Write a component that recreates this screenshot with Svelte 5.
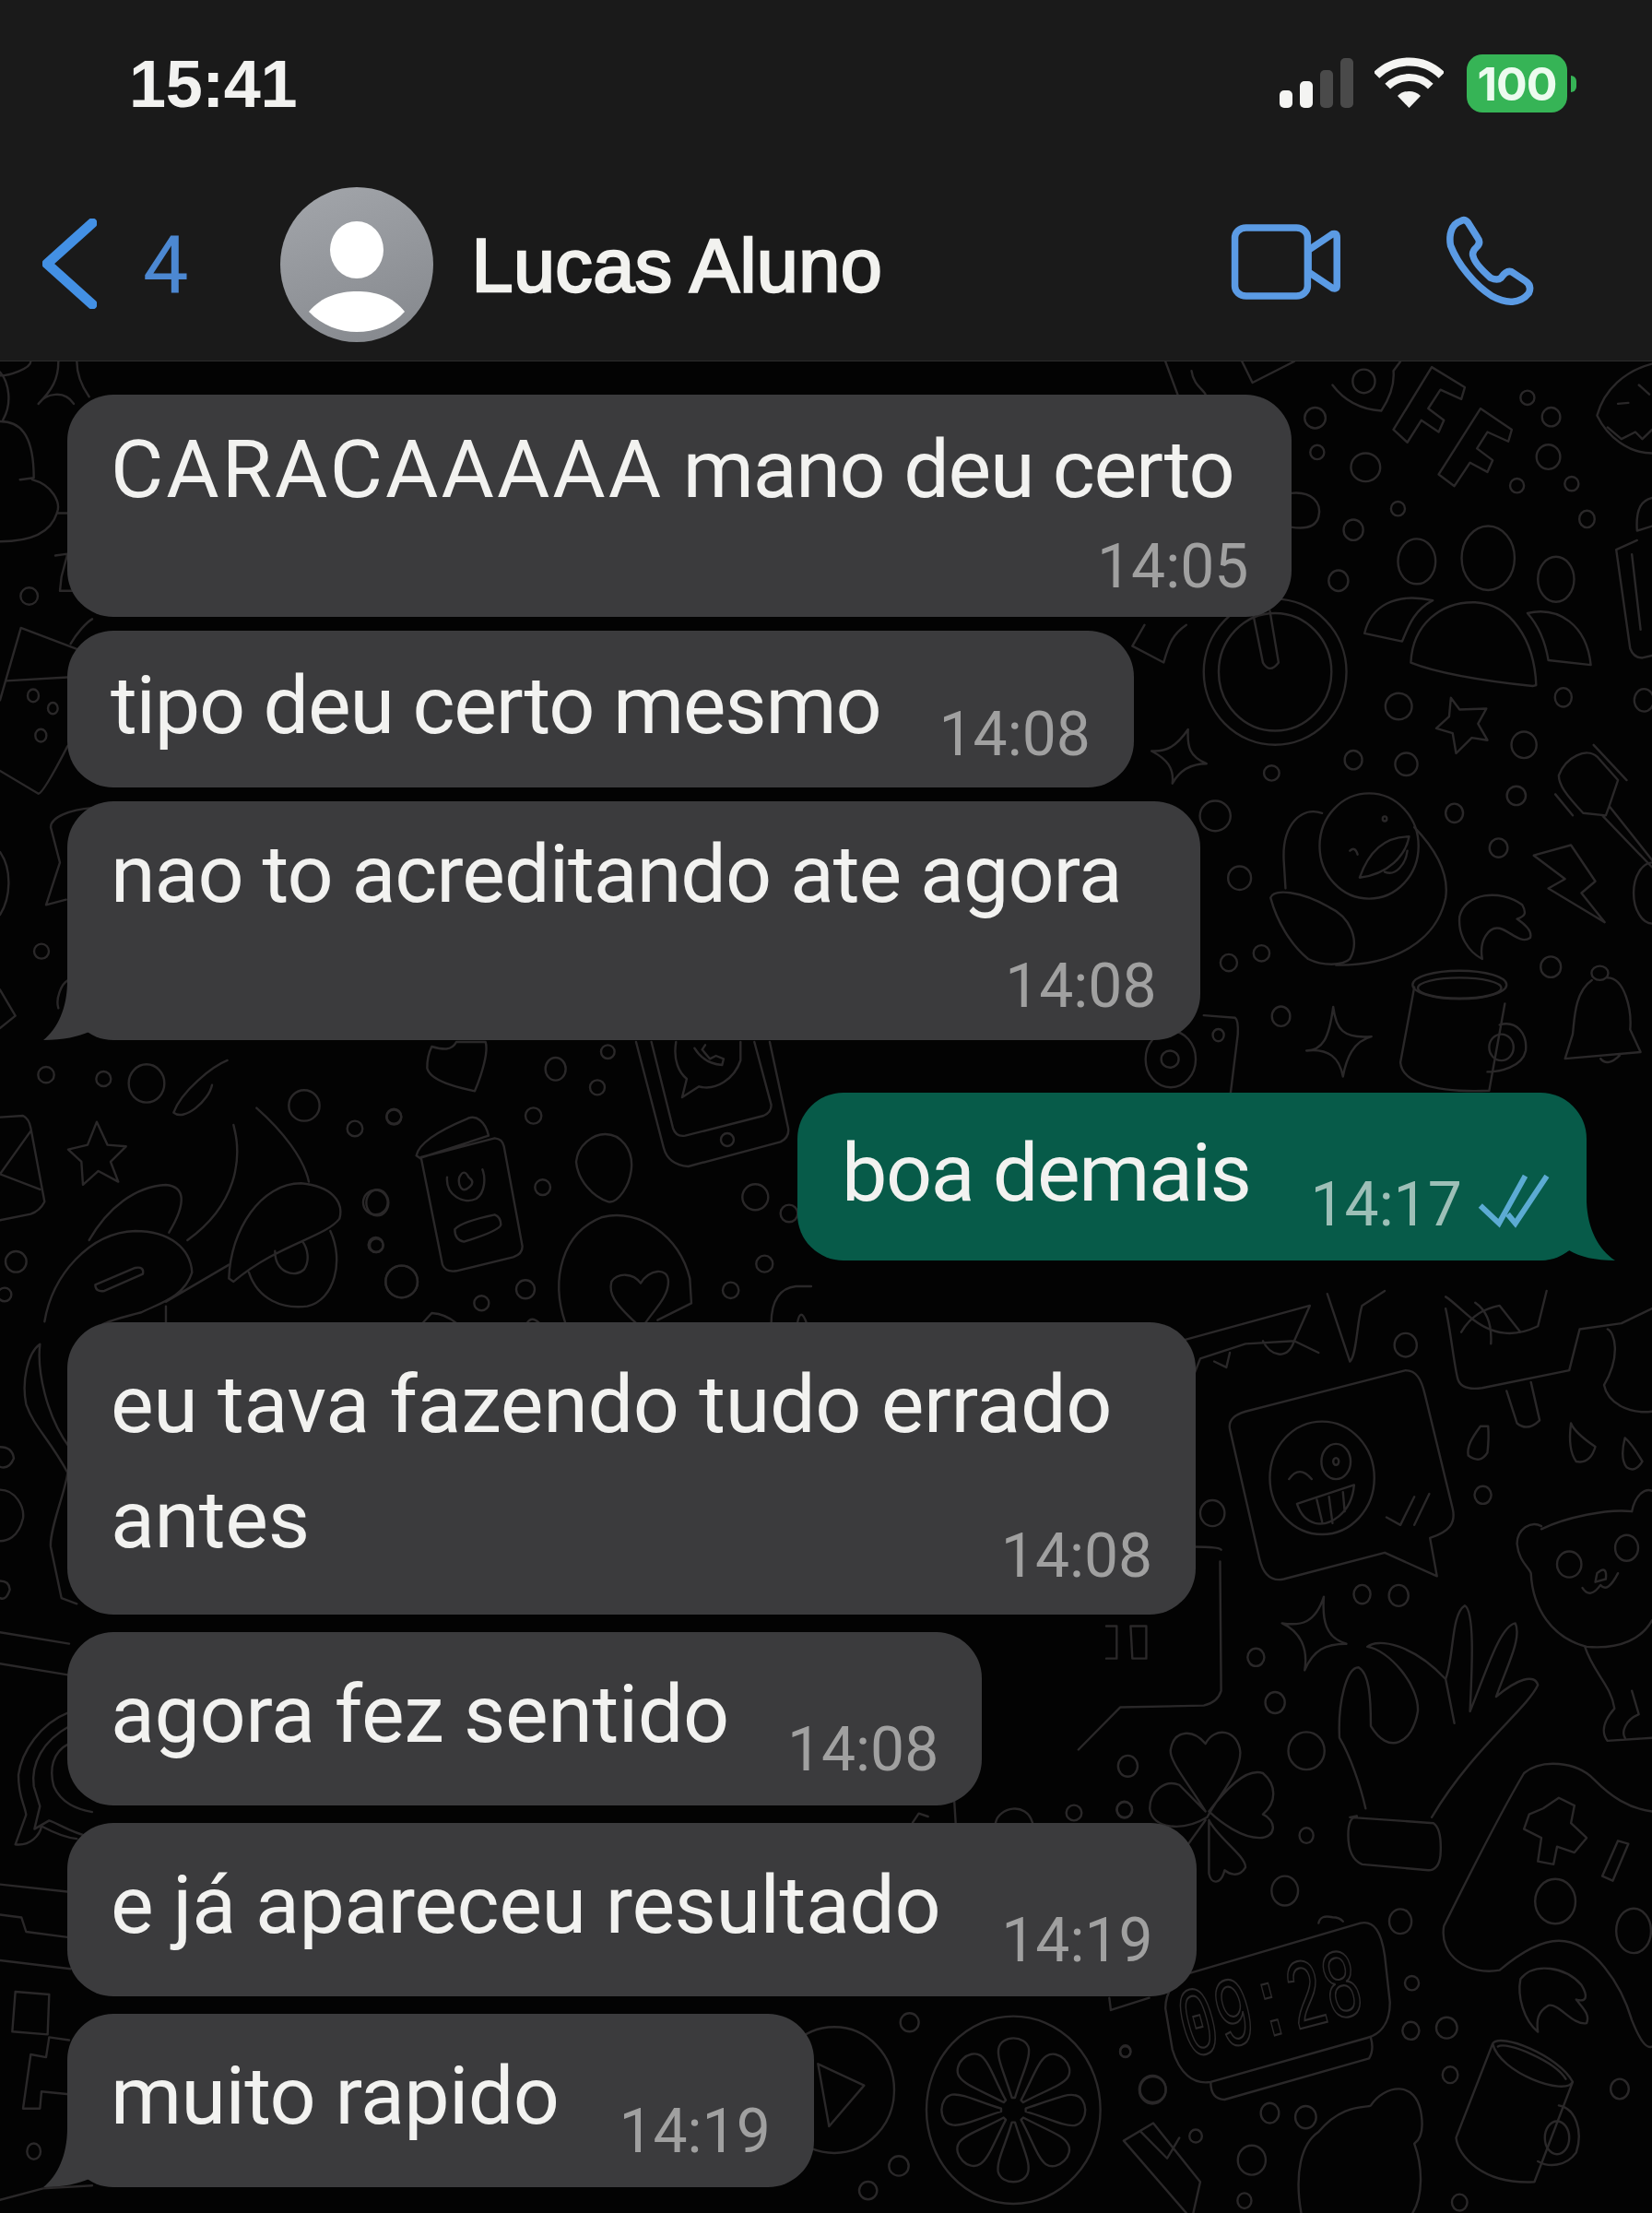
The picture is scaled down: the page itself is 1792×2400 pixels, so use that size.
<script>
  const rings6 = [[600,120,30,22],[606,193,20,15],[745,225,42,30],[710,358,28,22],[838,313,20,15],[667,466,28,22],[1210,77,20,15],[1278,118,26,20],[1270,203,34,26],[1180,264,20,15],[1337,260,20,15],[1381,335,22,18],[840,733,38,28],[710,847,25,20],[862,856,32,24],[1200,815,36,28],[1313,714,24,20],[1178,923,27,20],[1000,960,25,20],[1127,1034,26,20],[475,875,22,16],[313,966,44,32],[383,1098,33,25],[352,1278,24,18],[446,1258,23,17],[502,1392,26,21],[1277,1287,29,22],[1545,720,28,24],[740,42,32,25],[1097,418,76,68],[892,425,54,48],[1292,463,52,48],[485,660,205,155],[485,660,162,125],[1570,1130,55,65],[755,1030,142,112],[800,972,6,5],[1015,1325,135,30],[1015,1332,120,22],[1135,1458,35,28],[1418,1300,24,15],[185,1483,72,60],[183,1483,25,18],[322,1432,16,13]];
  const paths6 = ["M650 50Q700 100 790 105Q830 60 825 20L845 0","M825 145L935 12L1030 55L1020 80L960 60L925 100L970 125L955 150L905 125L865 172Z","M955 240L1075 100L1165 145L1155 170L1095 150L1065 185L1110 210L1095 235L1045 215L1000 265Z","M875 640C880 560 960 510 1060 512C1160 515 1230 590 1235 688L1225 690C1100 680 960 665 875 640Z","M742 578C760 520 830 490 938 508C880 530 865 570 850 595Z","M1210 535C1300 520 1380 560 1392 645L1270 635C1260 590 1240 560 1210 535Z","M1410 115C1430 60 1490 20 1568 5M1410 115C1440 160 1500 195 1568 195M1440 140L1480 165L1520 150L1540 165L1568 145M1470 90L1500 88M1530 50L1560 70","M1568 290C1540 295 1520 310 1525 360L1568 350M1525 380L1465 400L1505 610Q1515 630 1540 630L1568 625M1510 410L1535 570","M420 530L450 640Q470 665 495 640L470 530","M130 828C170 830 200 820 235 782C232 820 240 840 288 855C240 855 210 870 190 897C195 865 175 845 130 828Z","M990 715L1015 740L1092 738L1068 770L1095 805L1050 800L1005 833L995 790L948 780L985 755Z","M1300 880C1320 840 1380 820 1410 840L1470 890L1445 945L1568 1060M1400 815L1495 890M1300 880C1300 900 1320 920 1370 960L1435 965L1445 945M1290 920L1340 965M1425 965L1568 1075","M1228 1050L1335 1028L1405 1105L1365 1130L1432 1192L1270 1120L1318 1100Z","M620 960C560 945 505 985 510 1060L515 1120M885 990C950 1040 985 1090 975 1140C950 1230 830 1285 660 1283","M472 1140C480 1120 560 1125 640 1160C700 1180 730 1230 700 1270C680 1285 620 1285 580 1270C530 1240 490 1190 472 1140Z","M728 1097C750 1050 790 1010 870 1010C860 1050 810 1090 728 1097ZM800 1085C830 1095 860 1070 865 1040M700 1040Q715 1030 722 1048","M1080 1270C1040 1255 1010 1220 1015 1180C1030 1130 1130 1120 1195 1155C1210 1175 1200 1180 1180 1185C1200 1195 1225 1210 1218 1225C1190 1240 1160 1210 1130 1205C1100 1200 1070 1230 1080 1270Z","M885 1330L845 1490C850 1530 930 1555 1100 1550L1145 1365M1130 1410C1180 1400 1210 1430 1205 1465C1195 1500 1130 1510 1095 1510","M1395 1315C1345 1340 1345 1400 1340 1430L1318 1482L1535 1468L1505 1420C1510 1380 1490 1310 1440 1310M1420 1482Q1440 1500 1475 1475","M575 1465C620 1465 640 1440 652 1372C660 1420 680 1440 762 1435C710 1445 690 1480 680 1520C670 1480 640 1460 575 1465Z","M280 1390L370 1395Q380 1400 378 1430L355 1568","M530 280C590 275 620 300 610 330Q600 360 530 352","M170 0L205 70M245 20C250 50 280 60 285 70M390 0L420 45L540 0","M110 560L75 605L165 640C180 600 190 580 230 560"];

  const rings5 = [[860,92,32,20],[305,378,35,22],[1082,347,24,15],[735,516,24,16],[840,518,28,18],[430,623,24,15],[485,700,28,18],[575,782,52,32],[62,808,28,18],[52,882,22,14],[575,926,20,13],[513,1020,38,25],[845,1072,32,21],[878,1177,20,12],[875,1258,24,15],[978,1253,30,18],[988,1333,22,14],[55,1293,15,10],[133,1358,38,24],[470,1398,26,17],[573,1405,30,19],[418,1478,40,25],[257,1437,18,11],[397,1547,20,13],[1015,1550,22,14],[1475,1357,26,17],[1515,1088,50,38],[620,318,150,96],[660,290,42,30],[660,290,8,6],[1330,465,35,22],[1495,437,33,22],[1290,1038,58,38],[1295,1440,35,28]];
  const paths5 = ["M355 235C350 220 370 210 400 205L860 135C890 135 905 150 915 175L995 370C1005 395 985 410 930 420L950 485L800 445L510 490C470 495 450 480 440 455Z","M525 320Q555 295 590 320M548 362L712 330C705 380 640 400 600 395C570 390 555 375 548 362ZM605 355L620 392M640 350L650 395M680 342L685 375M805 385L845 398L885 350M885 398L928 345","M1075 230C1050 250 1035 265 1040 280Q1075 295 1095 275Q1100 250 1097 230Z","M1335 225C1345 240 1380 255 1405 265Q1390 295 1350 290Q1325 270 1335 225Z","M1490 250C1510 260 1530 280 1540 290Q1520 310 1495 300Q1475 285 1490 250Z","M1250 400C1220 390 1180 405 1180 430C1185 460 1215 470 1220 480C1225 540 1280 590 1380 605C1480 610 1540 590 1568 560M1250 405C1320 385 1440 370 1510 375C1520 345 1550 335 1568 340M1410 480Q1440 465 1435 490L1405 495ZM1368 505Q1390 525 1420 500Q1440 515 1470 480M1375 605C1400 650 1450 670 1460 710C1430 730 1420 750 1440 765L1568 760M1510 680L1530 720C1490 730 1480 750 1490 760","M505 565C560 570 600 565 625 520C620 560 630 590 690 600C630 600 595 610 570 645C580 610 560 580 505 565Z","M745 880C730 840 700 790 670 760C665 700 690 640 725 640C755 650 760 690 760 740C810 790 880 770 895 715C900 670 810 610 750 605C780 590 880 600 975 660C1000 620 990 550 1030 535C1060 545 1050 650 1045 715C1090 650 1130 570 1175 565C1195 590 1150 640 1120 690C1180 660 1230 650 1240 670C1210 710 1050 780 935 895M1000 735L975 660","M700 895L940 905Q965 915 960 960Q955 985 925 985L735 975Q695 965 695 925Q695 895 720 893Z","M285 885C240 840 180 800 185 780C195 745 250 745 285 770C310 740 380 745 385 785C385 820 320 860 290 895M290 895C220 920 130 915 125 880C125 850 170 830 210 840L285 885M295 885C340 850 400 810 450 820C490 840 490 870 450 890C490 900 490 930 440 930C390 930 330 905 295 885M295 900C320 930 400 960 400 980C380 1000 350 990 340 985C330 1010 300 1010 295 990L295 900M285 900L230 945","M1568 885C1500 880 1450 860 1400 830C1350 800 1250 795 1200 820C1120 900 1020 1020 970 1080C955 1130 1040 1165 1130 1155C1180 1130 1240 1105 1300 1105C1400 1105 1480 1180 1510 1240C1530 1270 1550 1290 1568 1285","M1255 880L1300 862L1345 875L1335 905L1380 930L1345 955L1295 945L1285 975L1240 970L1250 930L1200 915L1215 890Z","M1425 995L1470 935L1500 940L1455 1003Z","M1240 1260C1200 1240 1180 1200 1190 1170C1230 1140 1320 1150 1365 1180C1385 1200 1380 1210 1350 1205C1370 1220 1390 1230 1380 1245C1340 1250 1300 1210 1270 1215C1240 1225 1235 1240 1240 1260Z","M170 1220C170 1190 200 1170 240 1160L730 1075C770 1070 790 1090 800 1130L815 1210C815 1250 780 1265 750 1270L300 1345C250 1350 210 1330 190 1290ZM300 1345Q300 1375 340 1375L755 1305Q770 1290 760 1270M610 1075Q615 1060 650 1065Q670 1065 680 1072","M1110 1280C1130 1260 1300 1300 1340 1345C1320 1370 1130 1330 1110 1280ZM1125 1285C1150 1275 1290 1310 1320 1340M1110 1280L1005 1440C1010 1470 1080 1520 1230 1515L1340 1345M1300 1385C1350 1390 1370 1430 1350 1465C1320 1490 1270 1490 1240 1480","M975 30C990 70 1000 130 1010 150Q1020 170 1080 165L1330 135L1360 65L1480 55L1568 30M975 10C1030 30 1100 100 1240 60L1265 0M1020 70C1050 40 1090 30 1130 25L1190 70M1060 20Q1110 40 1105 90M1150 170L1180 225Q1210 240 1245 220L1220 155","M215 85L585 25L540 85L400 90L270 115L250 145M355 105L345 130L310 120M450 85C470 110 520 120 540 85M540 85L610 105M635 5L700 120C720 110 720 50 735 25L800 0","M1440 65C1460 70 1480 110 1430 160C1440 190 1500 210 1568 205","M330 440Q325 435 250 435M327 460L330 680Q320 700 280 705L40 708L-80 780M0 570L30 570L30 625L0 625M70 570L115 570L115 625L75 625Z","M560 1568C540 1500 560 1450 610 1430C680 1380 750 1390 760 1385C800 1350 890 1340 905 1400C910 1420 910 1440 885 1450C910 1490 910 1540 880 1568","M50 1445L135 1415L270 1515L250 1568M50 1445L230 1568M100 1430L175 1475L210 1440"];

  const rings7 = [[778,62,22,22],[608,118,33,37],[744,178,24,24],[82,275,24,24],[536,270,26,26],[566,503,25,25],[28,553,36,42],[25,692,22,22],[107,810,52,52],[510,835,30,30],[367,880,24,24],[1258,535,42,42],[1368,588,28,28],[1288,752,27,27],[1178,838,26,26],[1167,348,21,21]];
  const paths7 = ["M205 45C240 55 270 60 285 30L380 30C390 60 370 130 345 190C300 180 200 160 190 115Q190 75 205 45Z","M155 400C160 370 200 330 320 280C350 265 380 290 390 335L175 405M170 405L410 343Q435 345 440 370L500 695Q500 720 470 730L285 775Q250 780 240 755ZM155 400L170 410","M280 640Q300 615 410 592Q430 600 430 625Q425 645 310 680Q280 675 280 640Z","M255 470C250 530 310 560 350 540C380 520 380 470 370 445M330 500C300 530 290 490 295 470Q310 440 325 470C340 480 340 490 330 500Z","M770 330C820 330 860 380 855 440C850 500 810 555 780 550C730 535 680 480 675 420C680 365 730 330 770 330Z","M870 30L960 375Q975 430 1040 435L1340 355Q1370 340 1365 310L1305 30M920 30L990 310Q1000 340 1030 335L1285 270Q1310 260 1310 235L1255 30","M1000 30C990 90 1010 130 1035 150L1020 210L1075 175C1130 190 1190 150 1210 90L1210 30M1060 50Q1090 100 1150 105L1155 85L1130 75L1110 85L1085 55L1095 40","M640 945C590 800 630 650 760 600C880 570 1010 660 1045 800L1050 880L940 935M870 945C800 880 780 850 790 810C810 780 860 780 885 815C910 770 975 760 975 810C975 860 930 900 900 945","M175 945L205 912Q250 915 285 945M515 945Q530 920 555 945M1310 945C1310 870 1340 830 1390 825L1440 825M1395 945Q1405 890 1425 945"];

  const rings4 = [[135,245,24,24],[150,647,26,26],[337,660,24,24],[477,675,58,62],[990,747,50,50],[1155,822,25,25],[1282,782,24,24],[1222,1062,40,40],[1223,1200,24,24],[1307,1320,52,52],[52,1255,34,34],[15,1362,22,22]];
  const paths4 = ["M315 800L350 875L410 880L360 930L385 995L320 960L270 1005L265 930L222 890L285 875Z","M0 785L75 780Q95 790 100 820L145 1060Q130 1090 100 1100L0 1120M100 830L0 970L130 1020","M740 600C690 620 590 700 565 770C600 800 680 730 690 680M760 810C790 920 770 1070 610 1185M835 755C920 830 990 920 1005 995","M745 1310C750 1150 850 1000 980 1000C1080 1010 1120 1060 1105 1115C1060 1175 900 1200 760 1320ZM810 1290C840 1380 920 1410 1000 1400C1090 1380 1120 1250 1075 1155M895 1220C895 1290 960 1310 990 1280C1010 1250 1000 1210 985 1190","M290 1185C350 1080 440 1010 540 1005C600 1010 610 1060 550 1160M145 1450C170 1300 290 1160 440 1155C550 1155 620 1210 625 1290C600 1370 520 1390 460 1420C380 1440 300 1460 290 1500M310 1330L440 1275Q470 1270 465 1295L340 1350Q310 1355 310 1330ZM540 1385L745 1265M540 1400L540 1460","M0 370L50 455L0 495M220 340C200 350 180 400 190 430"];

  const rings10 = [[410,730,30,30],[375,1197,32,32],[275,1277,29,29],[945,48,25,25],[1110,38,25,25],[1112,825,17,17],[1202,948,42,42],[748,1015,283,305],[165,950,195,205]];
  const paths10 = ["M112 865L262 935L148 1068Z","M1060 650L1065 690L1190 650","M690 80C700 30 790 10 810 80M420 80L440 50L470 60M555 0L560 80"];
  const petals = [0,45,90,135,180,225,270,315];

  const rings8 = [[95,665,28,24],[108,947,18,18],[172,983,16,16],[133,1060,18,18]];
  const paths8 = ["M0 170C60 170 110 200 110 330L65 335M105 335C170 350 200 400 185 430C160 500 70 510 0 510M0 30C30 60 40 120 10 165M125 120C150 90 210 80 240 120M190 0C190 50 170 80 125 120M250 0Q250 50 290 100M190 430L220 430M0 40C30 40 100 20 100 0","M180 550L220 545L200 610L195 650L240 650","M68 755L250 815M68 755L0 960M20 905L220 895M0 1160L125 1225Q140 1225 220 1090M230 800C250 770 280 740 300 730","M300 1265C230 1270 165 1290 165 1320L195 1420L150 1540L215 1525M0 1390C40 1440 35 1520 0 1568"];

  const rings9 = [[110,1460,22,14]];
  const paths9 = ["M130 45C90 60 70 110 85 150C110 190 160 210 220 270C215 300 160 370 165 400L200 490L250 500M130 45C120 90 150 170 225 225","M0 225Q40 225 45 245Q30 265 0 260M0 300C50 300 80 330 75 350C60 385 20 390 0 390M0 460Q30 460 32 475Q20 495 0 490","M0 550L225 570M0 605L225 625","M225 690C130 710 70 760 60 800C60 840 80 850 85 870L50 922C100 925 130 905 135 890C170 900 210 910 250 912M225 715C140 740 100 780 110 820L130 855L112 895L160 880C190 885 225 900 300 910M225 745C170 760 160 790 175 820C200 850 250 860 300 865","M0 992L225 1005M0 1045L70 1050L85 1075L225 1085M0 1125L230 1140","M50 1180L160 1185L155 1255L40 1250Z","M100 1290L75 1385L130 1385L135 1355L225 1360M100 1290L150 1295L160 1260L225 1265","M0 1545L140 1525L300 1520"];

  const groups = [
    { t: "translate(1200 392) scale(.3776 .5102)", rings: rings6, paths: paths6 },
    { t: "translate(1200 1400) scale(.3776 .6378)", rings: rings5, paths: paths5 },
    { t: "translate(400 1120) scale(.3333)", rings: rings7, paths: paths7 },
    { t: "translate(0 950) scale(.3333)", rings: rings4, paths: paths4 },
    { t: "translate(850 1950) scale(.3333)", rings: rings10, paths: paths10 },
    { t: "translate(0 392) scale(.3333 .3827)", rings: rings8, paths: paths8 },
    { t: "translate(0 1430) scale(.3333 .6186)", rings: rings9, paths: paths9 }
  ];
</script>

<div class="phone">
  <header class="top">
    <div class="status">
      <span class="clock">15:41</span>
      <div class="indicators">
        <div class="signal">
          <i class="b1"></i><i class="b2"></i><i class="b3 off"></i><i class="b4 off"></i>
        </div>
        <svg class="wifi" viewBox="0 0 75 55" aria-hidden="true">
          <path d="M37.5 55L25 42A18 18 0 0 1 50 42Z" fill="#f4f4f2" />
          <path d="M14.2 31.7A33 33 0 0 1 60.8 31.7" fill="none" stroke="#f4f4f2" stroke-width="8" />
          <path d="M2.1 19.6A50 50 0 0 1 72.9 19.6" fill="none" stroke="#f4f4f2" stroke-width="9" />
        </svg>
        <div class="battery"><span>100</span></div>
        <i class="nub"></i>
      </div>
    </div>
    <nav class="nav">
      <svg class="chev" viewBox="0 0 59 98" aria-hidden="true">
        <path d="M54 5L5 49L54 93" fill="none" stroke="#4390e4" stroke-width="11" stroke-linecap="round" stroke-linejoin="round" />
      </svg>
      <span class="count">4</span>
      <div class="avatar">
        <svg viewBox="0 0 166 168" aria-hidden="true">
          <ellipse cx="83" cy="68" rx="29" ry="31" fill="#fff" />
          <path d="M31 135C45 118 65 113 83 113C102 113 122 118 135 135C122 150 102 157 83 157C65 157 45 150 31 135Z" fill="#fff" />
        </svg>
      </div>
      <span class="name">Lucas Aluno</span>
      <svg class="video" viewBox="358 730 314 245" preserveAspectRatio="none" aria-hidden="true">
        <rect x="370" y="742" width="208" height="221" rx="32" class="ic" />
        <path d="M580 815L650 762Q662 758 662 772L662 930Q662 942 650 938L580 885Z" class="ic" />
      </svg>
      <svg class="call" viewBox="970 700 268 303" preserveAspectRatio="none" aria-hidden="true">
        <path class="ic" d="M1020 720C990 730 985 770 990 800C1010 860 1060 930 1110 965C1150 990 1190 990 1215 955Q1225 930 1205 915L1165 885Q1150 880 1135 905Q1125 915 1105 905C1090 890 1060 860 1055 835Q1050 820 1065 805Q1078 790 1068 775L1040 725Q1030 712 1020 720Z" />
      </svg>
    </nav>
  </header>

  <main class="chat">
    <svg class="wall" viewBox="0 392 1792 2008" aria-hidden="true">
      {#each groups as g}
        <g transform={g.t}>
          {#each g.rings as r}
            <ellipse cx={r[0]} cy={r[1]} rx={r[2]} ry={r[3]} class="dd" />
          {/each}
          {#each g.paths as d}
            <path {d} class="dd" />
          {/each}
        </g>
      {/each}
      <g transform="translate(850 1950) scale(.3333) translate(748 1015)">
        {#each petals as a}
          <path class="dd" transform="rotate({a})" d="M-5 -40C-30 -120 -55 -170 -48 -200C-40 -245 40 -245 50 -200C55 -165 25 -110 5 -40Z" />
        {/each}
      </g>
      <text transform="translate(1289 2232) rotate(-14.7) scale(1 1.6)" class="clocktext">09:28</text>
    </svg>

    <div class="bubble in stack b-a">
      <p class="msg pad-a"><span class="caps">CARACAAAAA</span> mano deu certo</p>
      <span class="time">14:05</span>
    </div>
    <div class="bubble in row b-b">
      <p class="msg ls-b">tipo deu certo mesmo</p>
      <span class="time">14:08</span>
    </div>
    <div class="bubble in stack b-c tailed">
      <p class="msg pad-c ls-c">nao to acreditando ate agora</p>
      <span class="time">14:08</span>
      <svg class="tail left" viewBox="0 0 80 64" aria-hidden="true"><path d="M26 0C26 30 15 52 0 64C22 64 38 60 50 55Q62 62 80 64L80 0Z" /></svg>
    </div>

    <div class="bubble out row b-s">
      <p class="msg ls-s">boa demais</p>
      <span class="time">14:17</span>
      <svg class="checks" viewBox="1262 378 128 172" preserveAspectRatio="none" aria-hidden="true">
        <path d="M1268 482L1300 540L1345 385M1315 510L1328 540L1382 385" />
      </svg>
      <svg class="tail right" viewBox="0 0 80 64" aria-hidden="true"><path d="M49 0C50 30 62 52 80 64C58 64 42 60 30 53Q18 62 0 64L0 0Z" /></svg>
    </div>

    <div class="bubble in stack b-d">
      <p class="msg pad-d ls-d">eu tava fazendo tudo errado<br />antes</p>
      <span class="time over">14:08</span>
    </div>
    <div class="bubble in row b-e">
      <p class="msg ls-e">agora fez sentido</p>
      <span class="time low">14:08</span>
    </div>
    <div class="bubble in row b-e">
      <p class="msg ls-f">e já apareceu resultado</p>
      <span class="time low">14:19</span>
    </div>
    <div class="bubble in row b-e tailed">
      <p class="msg ls-g">muito rapido</p>
      <span class="time low">14:19</span>
      <svg class="tail left" viewBox="0 0 80 64" aria-hidden="true"><path d="M26 0C26 30 15 52 0 64C22 64 38 60 50 55Q62 62 80 64L80 0Z" /></svg>
    </div>
  </main>
</div>

<style>
  :global(body) {
    margin: 0;
    background: #030303;
  }
  .phone {
    width: 1792px;
    height: 2400px;
    overflow: hidden;
    display: flex;
    flex-direction: column;
    font-family: Roboto, "Liberation Sans", sans-serif;
    color: #f2f2f0;
  }
  .top {
    height: 391px;
    flex: none;
    background: #1a1a1a;
    border-bottom: 1px solid #2c2c2c;
  }
  .status {
    display: flex;
    justify-content: space-between;
    align-items: flex-start;
    padding: 58px 82px 0 140px;
    height: 118px;
    box-sizing: content-box;
  }
  .clock {
    font: 700 72px/66px "Liberation Sans", sans-serif;
    letter-spacing: -.4px;
  }
  .indicators {
    display: flex;
    align-items: flex-start;
    margin-top: 1px;
  }
  .signal {
    display: flex;
    align-items: flex-end;
    gap: 8px;
    height: 54px;
    margin-top: 4px;
  }
  .signal i {
    width: 14px;
    border-radius: 5px;
    background: #f4f4f2;
  }
  .signal .b1 { height: 19px; }
  .signal .b2 { height: 29px; }
  .signal .b3 { height: 41px; }
  .signal .b4 { height: 54px; }
  .signal .off { background: #4a4a4a; }
  .wifi {
    width: 75px;
    height: 55px;
    margin: 3px 0 0 23px;
  }
  .battery {
    width: 109px;
    height: 63px;
    margin-left: 25px;
    border-radius: 17px;
    background: #36b456;
    display: flex;
    align-items: center;
    justify-content: center;
  }
  .battery span {
    font: 700 50px/1 Inter, Roboto, sans-serif;
    color: #ecfbef;
    letter-spacing: -1px;
  }
  .nub {
    width: 6px;
    height: 18px;
    margin: 23px 0 0 4px;
    border-radius: 0 6px 6px 0;
    background: #36b456;
  }
  .nav {
    display: flex;
    align-items: center;
    height: 215px;
    padding-top: 6px;
    box-sizing: border-box;
  }
  .chev {
    width: 59px;
    height: 98px;
    margin: -2px 0 0 46px;
    flex: none;
  }
  .count {
    margin-left: 50px;
    font: 400 88px/1 Roboto, sans-serif;
    color: #4c88d2;
  }
  .avatar {
    width: 166px;
    height: 168px;
    margin-left: 100px;
    border-radius: 50%;
    background: linear-gradient(160deg, #a3a6ab, #84878c);
    flex: none;
  }
  .avatar svg {
    display: block;
  }
  .name {
    margin-left: 41px;
    margin-top: 4px;
    font: 400 81px/1 "Liberation Sans", sans-serif;
    letter-spacing: .4px;
    -webkit-text-stroke: 2.4px #f2f2ef;
    color: #f2f2ef;
    width: 824px;
    flex: none;
  }
  .video {
    width: 119px;
    height: 82px;
    margin: -6px 0 0 0;
    flex: none;
  }
  .call {
    width: 101px;
    height: 101px;
    margin: -6px 0 0 112px;
    flex: none;
  }
  .ic {
    fill: none;
    stroke: #5b9be4;
    stroke-width: 7.5;
    vector-effect: non-scaling-stroke;
    stroke-linejoin: round;
  }
  .chat {
    position: relative;
    flex: 1;
    display: flex;
    flex-direction: column;
    align-items: flex-start;
    padding-top: 36px;
    background: #030303;
  }
  .wall {
    position: absolute;
    inset: 0;
    width: 1792px;
    height: 2008px;
  }
  .dd {
    fill: none;
    stroke: #2a2829;
    stroke-width: 2.4;
    vector-effect: non-scaling-stroke;
    stroke-linejoin: round;
    stroke-linecap: round;
  }
  .clocktext {
    font: 400 67px "Liberation Mono", monospace;
    fill: none;
    stroke: #2c2a2b;
    stroke-width: 1.4;
  }
  .bubble {
    position: relative;
    border-radius: 50px;
    box-sizing: border-box;
  }
  .in {
    background: #3b3b3d;
    margin-left: 73px;
    padding: 0 47px 0 47px;
  }
  .out {
    background: #075b49;
    align-self: flex-start;
    margin-left: 865px;
    padding: 0 38px 0 48px;
  }
  .row {
    display: flex;
    align-items: flex-end;
    gap: 63px;
  }
  .stack {
    display: flex;
    flex-direction: column;
    align-items: flex-end;
  }
  .msg {
    margin: 0;
    font-size: 88px;
    line-height: 125px;
    letter-spacing: -.6px;
    white-space: nowrap;
    align-self: flex-start;
    position: relative;
    top: -2px;
  }
  .caps { letter-spacing: 3px; }
  .ls-b { letter-spacing: -1.2px; }
  .ls-c { letter-spacing: -1px; }
  .ls-s { letter-spacing: -1.4px; }
  .ls-d { letter-spacing: -.3px; }
  .ls-e { letter-spacing: -.4px; }
  .ls-f { letter-spacing: -.45px; margin-right: 3px; }
  .ls-g { margin-right: 2px; }
  .pad-a { padding-right: 16px; letter-spacing: -1.25px; }
  .pad-c { padding-right: 38px; }
  .pad-d { padding-right: 44px; }
  .time {
    font-size: 66px;
    line-height: 64px;
    font-weight: 400;
    color: #a0a0a0;
    white-space: nowrap;
  }
  .out .time {
    color: #9dbfb7;
    margin-bottom: -3px;
    margin-left: 2px;
  }
  .time.low { margin-bottom: -7px; }
  .time.over { margin-top: -56px; }
  .b-a { padding-top: 20px; padding-bottom: 22px; margin-top: 0; }
  .b-a .time { margin-top: 10px; }
  .b-b { padding-top: 20px; padding-bottom: 25px; margin-top: 15px; }
  .b-c { padding-top: 18px; padding-bottom: 26px; margin-top: 15px; }
  .b-c .time { margin-top: 26px; }
  .b-s { padding-top: 26px; padding-bottom: 31px; margin-top: 57px; }
  .b-d { padding-top: 28px; padding-bottom: 31px; margin-top: 67px; }
  .b-e { padding-top: 28px; padding-bottom: 35px; margin-top: 19px; }
  .checks {
    width: 81px;
    height: 57px;
    flex: none;
    margin: 0 0 6px -47px;
    overflow: visible;
  }
  .checks path {
    fill: none;
    stroke: #5cabd3;
    stroke-width: 6;
    vector-effect: non-scaling-stroke;
  }
  .tail {
    position: absolute;
    bottom: 0;
    width: 80px;
    height: 64px;
  }
  .tail.left { left: -26px; }
  .tail.left path { fill: #3b3b3d; }
  .tail.right { right: -31px; }
  .tail.right path { fill: #075b49; }
</style>
